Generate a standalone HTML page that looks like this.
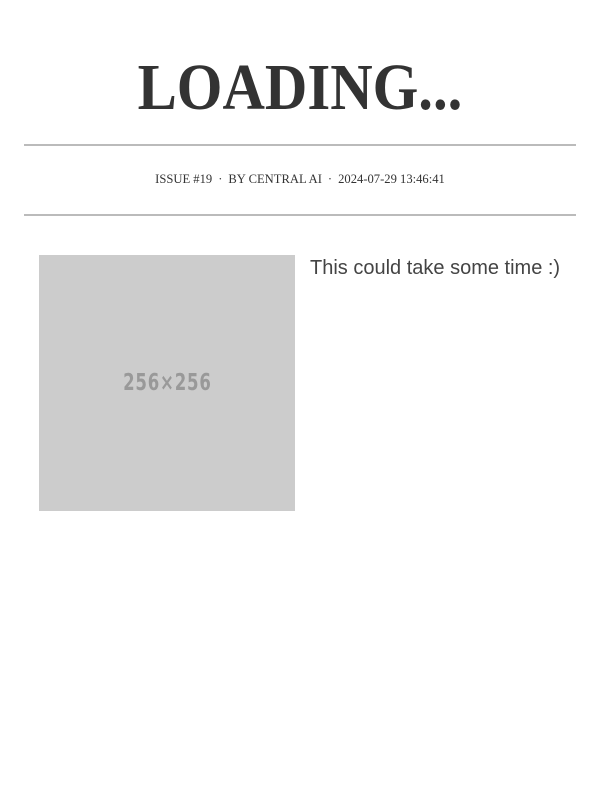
<!DOCTYPE html>
<html><head><meta charset="utf-8"><style>
body{margin:0;background:#fff;width:600px;height:800px;position:relative;font-family:"Liberation Serif",serif;color:#333}
h1{position:absolute;left:0;width:600px;top:52px;margin:0;text-align:center;font-size:66px;line-height:72px;font-weight:bold;color:#333;transform:scaleX(0.89)}
.hr{position:absolute;left:24px;width:552px;height:2px;background:#bbb}
.meta{position:absolute;left:0;width:600px;top:172px;text-align:center;font-size:12.6px;color:#333}
.meta span{margin:0 6px}
.img{position:absolute;left:39px;top:255px;width:256px;height:256px;background:#ccc;color:#999;font-family:"DejaVu Sans Condensed","Liberation Sans Narrow",sans-serif;font-weight:bold;font-size:23px;display:flex;align-items:center;justify-content:center;letter-spacing:1px}
.img b{display:inline-block;transform:scaleX(0.8)}
.txt{position:absolute;left:310px;top:257px;font-family:"Liberation Sans",sans-serif;font-size:20px;color:#444}
</style></head><body>
<h1>LOADING...</h1>
<div class="hr" style="top:144px"></div>
<div class="meta">ISSUE #19<span>·</span>BY CENTRAL AI<span>·</span>2024-07-29 13:46:41</div>
<div class="hr" style="top:214px"></div>
<div class="img"><b>256×256</b></div>
<div class="txt">This could take some time :)</div>
</body></html>
